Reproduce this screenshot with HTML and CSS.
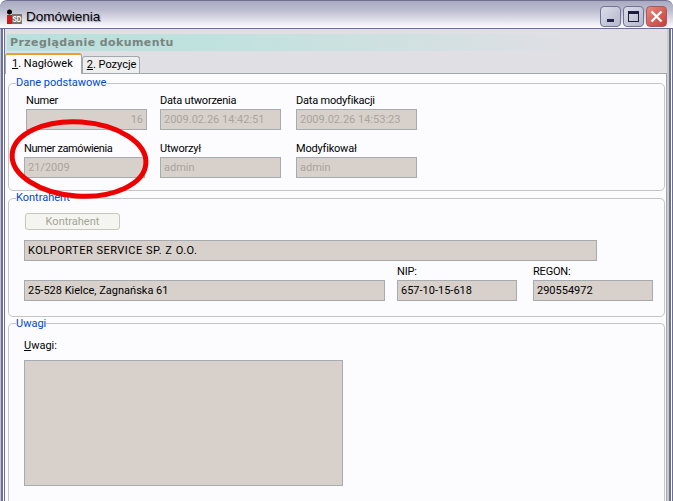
FILE: index.html
```html
<!DOCTYPE html>
<html lang="pl">
<head>
  <meta charset="UTF-8" />
  <title>Domówienia</title>
  <link rel="stylesheet" href="styles.css">
</head>
<body>
  <div class="okno">
    <div class="pasek">
      <svg class="logo" width="16" height="16" viewBox="0 0 16 16">
        <circle cx="3.5" cy="3" r="2.5" fill="#000"/>
        <rect x="1" y="6" width="5" height="9" fill="#d01818"/>
        <rect x="6" y="5" width="10" height="10" fill="#77756a"/>
        <text x="6.5" y="9.3" transform="scale(1 1.4)" font-family="Liberation Sans, Arial, sans-serif" font-size="6.5" font-weight="bold" fill="#fff">SD</text>
      </svg>
      <span class="tytul">Domówienia</span>
      <div class="przyciski">
        <button class="btn"><span class="ikona-min"></span></button>
        <button class="btn"><span class="ikona-max"></span></button>
        <button class="btn zamknij">
          <svg width="15" height="15" viewBox="0 0 15 15"><path d="M2.5 2.5L12.5 12.5M12.5 2.5L2.5 12.5" stroke="#fff" stroke-width="2.4"/></svg>
        </button>
      </div>
    </div>

    <div class="tresc">
      <div class="naglowek">Przeglądanie dokumentu</div>

      <div class="zakladki">
        <div class="zakladka aktywna"><u>1</u>. Nagłówek</div>
        <div class="zakladka"><u>2</u>. Pozycje</div>
      </div>

      <div class="panel">
        <fieldset class="grupa dane">
          <legend>Dane podstawowe</legend>
          <div class="siatka">
            <div class="pole">
              <label>Numer</label>
              <div class="wartosc prawo">16</div>
            </div>
            <div class="pole">
              <label>Data utworzenia</label>
              <div class="wartosc">2009.02.26 14:42:51</div>
            </div>
            <div class="pole">
              <label>Data modyfikacji</label>
              <div class="wartosc">2009.02.26 14:53:23</div>
            </div>
            <div class="pole przesuniete">
              <label>Numer zamówienia</label>
              <div class="wartosc">21/2009</div>
            </div>
            <div class="pole">
              <label>Utworzył</label>
              <div class="wartosc">admin</div>
            </div>
            <div class="pole">
              <label>Modyfikował</label>
              <div class="wartosc">admin</div>
            </div>
          </div>
        </fieldset>

        <fieldset class="grupa kontrahent">
          <legend>Kontrahent</legend>
          <button class="guzik">Kontrahent</button>
          <div class="wartosc ciemna nazwa">KOLPORTER SERVICE SP. Z O.O.</div>
          <div class="adres">
            <div class="pole szerokie">
              <div class="wartosc ciemna">25-528 Kielce, Zagnańska 61</div>
            </div>
            <div class="pole nip">
              <label>NIP:</label>
              <div class="wartosc ciemna">657-10-15-618</div>
            </div>
            <div class="pole regon">
              <label>REGON:</label>
              <div class="wartosc ciemna">290554972</div>
            </div>
          </div>
        </fieldset>

        <fieldset class="grupa uwagi">
          <legend>Uwagi</legend>
          <label class="etykieta"><u>U</u>wagi:</label>
          <div class="notatka"></div>
        </fieldset>
      </div>

      <svg class="obwodka" width="150" height="90" viewBox="0 0 150 90">
        <ellipse cx="79" cy="45" rx="67" ry="37" fill="none" stroke="#ee0000" stroke-width="5" transform="rotate(4 79 45)"/>
      </svg>
    </div>
  </div>
</body>
</html>
```

FILE: styles.css
```css
html, body {
  margin: 0;
  height: 100%;
  overflow: hidden;
}

body {
  font-family: Roboto, "Liberation Sans", Arial, sans-serif;
  font-size: 11px;
  color: #000;
  background-color: #fff;
}

.okno {
  position: relative;
  height: 501px;
  overflow: hidden;
  display: flex;
  flex-direction: column;
  background-color: #fff;
}

.pasek {
  height: 28px;
  flex: none;
  box-sizing: border-box;
  display: flex;
  align-items: center;
  padding: 4px 6px 0 6px;
  border-radius: 7px 7px 0 0;
  border-top: 1px solid #6f7090;
  background: linear-gradient(#a9a9c1 0%, #bdbdd0 35%, #e4e4ee 75%, #fff 100%);
}

.logo {
  margin-right: 4px;
}

.tytul {
  font-family: "Liberation Sans", Arial, sans-serif;
  font-size: 13.5px;
  color: #000;
  text-shadow: 1px 1px 1px #9a9ab4;
}

.przyciski {
  margin-left: auto;
  display: flex;
  gap: 2px;
}

.btn {
  width: 21px;
  height: 21px;
  padding: 0;
  display: flex;
  align-items: center;
  justify-content: center;
  border: 1px solid #6f7396;
  border-radius: 4px;
  background: linear-gradient(135deg, #dcdde9, #b4b6cc);
}

.ikona-min {
  width: 7px;
  height: 3px;
  margin-top: 7px;
  background-color: #24244a;
}

.ikona-max {
  width: 9px;
  height: 7px;
  border: 1px solid #1c1c3c;
  border-top-width: 3px;
}

.zamknij {
  border-color: #a85a5a;
  background: linear-gradient(135deg, #e58a80, #c83c38);
}

.tresc {
  position: relative;
  flex: 1;
  min-height: 0;
  box-sizing: border-box;
  display: flex;
  flex-direction: column;
  padding: 5px 6px 0 5px;
  border-top: 1px solid #6c7094;
  background-color: #dfdfe4;
  box-shadow:
    inset 1px 0 #c4c4d4,
    inset 3px 0 #6c7094,
    inset 4px 0 #fff,
    inset 5px 0 #6c7094,
    inset -1px 0 #6c7094,
    inset -2px 0 #fff,
    inset -4px 0 #6c7094,
    inset -6px 0 #c9cdc4;
}

.naglowek {
  height: 17px;
  flex: none;
  line-height: 17px;
  margin-left: 2px;
  padding-left: 3px;
  font-family: "DejaVu Sans", Verdana, sans-serif;
  font-size: 11px;
  font-weight: bold;
  letter-spacing: 0.4px;
  color: #7a8480;
  background: linear-gradient(90deg, #b8e0dc 0%, #bfe2de 30%, #dfdfe4 85%);
}

.zakladki {
  display: flex;
  flex: none;
  align-items: flex-end;
  height: 20px;
  margin-top: 2px;
}

.zakladka {
  height: 16px;
  line-height: 16px;
  padding: 0 3px 0 4px;
  border: 1px solid #a3a8ac;
  border-bottom: none;
  border-radius: 3px 3px 0 0;
  background-color: #eeeeee;
}

.aktywna {
  height: 19px;
  line-height: 18px;
  padding: 0 8px 0 6px;
  background-color: #fcfcfe;
  border-top: 2px solid #e8a030;
  margin-bottom: -1px;
  position: relative;
  z-index: 1;
}

.panel {
  flex: 1;
  box-sizing: border-box;
  border-top: 1px solid #a3a8ac;
  border-right: 1px solid #a3a8ac;
  padding: 2px 1px 0 3px;
  background-color: #fcfcfe;
}

.grupa {
  margin: 0;
  padding: 0;
  min-width: 0;
  box-sizing: border-box;
  border: 1px solid #c4c6c6;
  border-radius: 5px;
}

.grupa legend {
  padding: 0;
  margin-left: 7px;
  color: #0046d5;
  line-height: 14px;
}

.dane {
  height: 115px;
}

.kontrahent {
  height: 126px;
}

.uwagi {
  height: 184px;
  border-bottom: none;
  border-radius: 5px 5px 0 0;
}

.uwagi legend {
  line-height: 13px;
}

.siatka {
  display: grid;
  grid-template-columns: 134px 136px 121px;
  row-gap: 11px;
  padding: 3px 0 0 17px;
}

.pole {
  width: 121px;
}

.pole label {
  display: block;
  height: 16px;
  line-height: 15px;
  letter-spacing: -0.2px;
  white-space: nowrap;
}

.przesuniete {
  margin-left: -2px;
}

.przesuniete label {
  letter-spacing: -0.4px;
}

.wartosc {
  height: 21px;
  line-height: 19px;
  box-sizing: border-box;
  padding: 0 3px;
  border: 1px solid #a6abb0;
  color: #a8a49e;
  background-color: #d8d1cb;
  white-space: nowrap;
  overflow: hidden;
}

.prawo {
  text-align: right;
}

.ciemna {
  color: #000;
}

.guzik {
  display: block;
  width: 95px;
  height: 17px;
  margin: 8px 0 0 16px;
  padding: 0;
  font: inherit;
  color: #a4a498;
  background-color: #f4f4f0;
  border: 1px solid #c9c7ba;
  border-radius: 3px;
}

.nazwa {
  width: 573px;
  margin: 10px 0 0 15px;
  letter-spacing: 0.5px;
}

.adres {
  display: flex;
  align-items: flex-end;
  margin: 3px 0 0 15px;
}

.szerokie {
  width: 361px;
}

.nip {
  width: 120px;
  margin-left: 12px;
}

.regon {
  width: 120px;
  margin-left: 16px;
}

.etykieta {
  display: block;
  margin: 8px 0 0 15px;
  line-height: 15px;
}

.notatka {
  width: 319px;
  height: 126px;
  box-sizing: border-box;
  margin: 7px 0 0 15px;
  border: 1px solid #a6abb0;
  background-color: #d8d1cb;
}

.obwodka {
  position: absolute;
  left: 0;
  top: 85px;
  z-index: 2;
}
```
